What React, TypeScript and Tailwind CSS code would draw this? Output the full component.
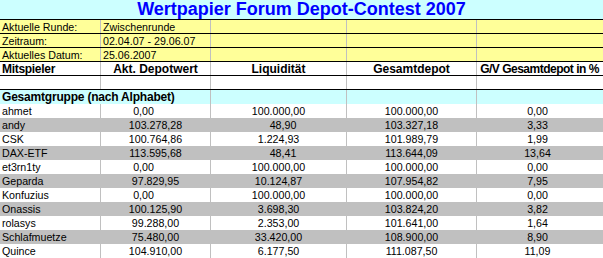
import React from "react";

type Row = {
  name: string;
  a: string;
  l: string;
  g: string;
  p: string;
  grey: boolean;
};

const rows: Row[] = [
  { name: "ahmet", a: "0,00", l: "100.000,00", g: "100.000,00", p: "0,00", grey: false },
  { name: "andy", a: "103.278,28", l: "48,90", g: "103.327,18", p: "3,33", grey: true },
  { name: "CSK", a: "100.764,86", l: "1.224,93", g: "101.989,79", p: "1,99", grey: false },
  { name: "DAX-ETF", a: "113.595,68", l: "48,41", g: "113.644,09", p: "13,64", grey: true },
  { name: "et3rn1ty", a: "0,00", l: "100.000,00", g: "100.000,00", p: "0,00", grey: false },
  { name: "Geparda", a: "97.829,95", l: "10.124,87", g: "107.954,82", p: "7,95", grey: true },
  { name: "Konfuzius", a: "0,00", l: "100.000,00", g: "100.000,00", p: "0,00", grey: false },
  { name: "Onassis", a: "100.125,90", l: "3.698,30", g: "103.824,20", p: "3,82", grey: true },
  { name: "rolasys", a: "99.288,00", l: "2.353,00", g: "101.641,00", p: "1,64", grey: false },
  { name: "Schlafmuetze", a: "75.480,00", l: "33.420,00", g: "108.900,00", p: "8,90", grey: true },
  { name: "Quince", a: "104.910,00", l: "6.177,50", g: "111.087,50", p: "11,09", grey: false },
];

const txt = "text-[10.67px] leading-[11px] pt-[2px] text-black whitespace-nowrap overflow-visible";
const hdr = "text-[12px] leading-[12px] pt-[1px] font-bold text-black whitespace-nowrap";
const grid = "border-r border-[#c0c0c0]";

function YellowRow({ label, value }: { label: string; value: string }) {
  return (
    <div className="flex h-[14px] bg-[#ffff99] border-b border-black">
      <div className={`w-[101px] h-full ${grid} ${txt} pl-[2px]`}>{label}</div>
      <div className={`w-[110px] h-full ${grid} ${txt} pl-[2px]`}>{value}</div>
      <div className={`w-[136px] h-full ${grid}`} />
      <div className={`w-[130px] h-full ${grid}`} />
      <div className="w-[126px] h-full" />
    </div>
  );
}

export default function App() {
  return (
    <div className="w-[603px] h-[258px] overflow-hidden bg-white font-['Liberation_Sans',Arial,sans-serif]">
      <div className="h-[20px] bg-[#ccffff] border-b border-black flex justify-center text-[18px] leading-[19px] font-bold text-[#0000ff] whitespace-nowrap">
        Wertpapier Forum Depot-Contest 2007
      </div>
      <YellowRow label="Aktuelle Runde:" value="Zwischenrunde" />
      <YellowRow label="Zeitraum:" value="02.04.07 - 29.06.07" />
      <YellowRow label="Aktuelles Datum:" value="25.06.2007" />

      <div className="flex h-[14px] bg-white border-b border-black">
        <div className={`w-[101px] h-full ${grid} ${hdr} pl-[2px] tracking-[-0.3px]`}>Mitspieler</div>
        <div className={`w-[110px] h-full ${grid} ${hdr} text-center`}>Akt. Depotwert</div>
        <div className={`w-[136px] h-full ${grid} ${hdr} text-center`}>Liquidität</div>
        <div className={`w-[130px] h-full ${grid} ${hdr} text-center`}>Gesamtdepot</div>
        <div className={`w-[126px] h-full ${hdr} text-center pr-[1px] tracking-[-0.5px]`}>G/V Gesamtdepot in %</div>
      </div>

      <div className="flex h-[14px] bg-white border-b border-black">
        <div className={`w-[101px] h-full ${grid}`} />
        <div className={`w-[110px] h-full ${grid}`} />
        <div className={`w-[136px] h-full ${grid}`} />
        <div className={`w-[130px] h-full ${grid}`} />
        <div className="w-[126px] h-full" />
      </div>

      <div className="flex h-[14px] bg-[#ccffff]">
        <div className={`w-[211px] h-full ${grid} ${hdr} text-[#0000ff] pl-[2px] tracking-[-0.2px]`}>
          Gesamtgruppe (nach Alphabet)
        </div>
        <div className={`w-[136px] h-full ${grid}`} />
        <div className={`w-[130px] h-full ${grid}`} />
        <div className="w-[126px] h-full" />
      </div>

      {rows.map((r) => (
        <div key={r.name} className={`flex h-[14px] ${r.grey ? "bg-[#c0c0c0]" : "bg-white"}`}>
          <div className={`w-[101px] h-full ${grid} ${txt} pl-[2px]`}>{r.name}</div>
          <div className={`w-[110px] h-full ${grid} ${txt} text-center ${r.a === "0,00" ? "pr-[24px]" : ""}`}>{r.a}</div>
          <div className={`w-[136px] h-full ${grid} ${txt} text-center ${r.l.length === 5 ? "pl-[9px]" : ""}`}>{r.l}</div>
          <div className={`w-[130px] h-full ${grid} ${txt} text-center`}>{r.g}</div>
          <div className={`w-[126px] h-full ${txt} text-center pr-[5px]`}>{r.p}</div>
        </div>
      ))}
    </div>
  );
}
